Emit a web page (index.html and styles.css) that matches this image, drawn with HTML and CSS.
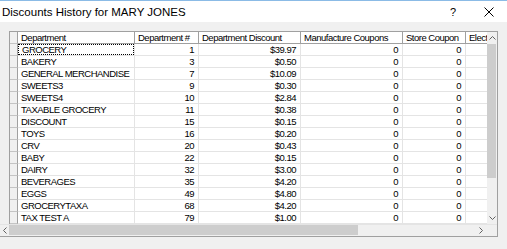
FILE: index.html
```html
<!DOCTYPE html>
<html>
<head>
<meta charset="utf-8">
<link rel="stylesheet" href="styles.css">
</head>
<body>
<div class="window">
  <div class="titlebar">
    <span class="title">Discounts History for MARY JONES</span>
    <span class="help">?</span>
    <svg class="close" width="10" height="10" viewBox="0 0 10 10"><path d="M0.5 0.5 L9.5 9.5 M9.5 0.5 L0.5 9.5" stroke="#000" stroke-width="1" fill="none"/></svg>
  </div>
  <div class="content">
    <div class="panel">
      <div class="main">
        <div class="gutter"></div>
        <div class="table">
          <div class="row head">
            <div class="c rh"></div>
            <div class="c">Department</div>
            <div class="c">Department #</div>
            <div class="c">Department Discount</div>
            <div class="c">Manufacture Coupons</div>
            <div class="c">Store Coupon</div>
            <div class="c last">Electronic Coupons</div>
          </div>
          <div class="row"><div class="c rh"></div><div class="c"><span class="focus">GROCERY</span></div><div class="c n">1</div><div class="c n">$39.97</div><div class="c n">0</div><div class="c n">0</div><div class="c last"></div></div>
          <div class="row"><div class="c rh"></div><div class="c">BAKERY</div><div class="c n">3</div><div class="c n">$0.50</div><div class="c n">0</div><div class="c n">0</div><div class="c last"></div></div>
          <div class="row"><div class="c rh"></div><div class="c">GENERAL MERCHANDISE</div><div class="c n">7</div><div class="c n">$10.09</div><div class="c n">0</div><div class="c n">0</div><div class="c last"></div></div>
          <div class="row"><div class="c rh"></div><div class="c">SWEETS3</div><div class="c n">9</div><div class="c n">$0.30</div><div class="c n">0</div><div class="c n">0</div><div class="c last"></div></div>
          <div class="row"><div class="c rh"></div><div class="c">SWEETS4</div><div class="c n">10</div><div class="c n">$2.84</div><div class="c n">0</div><div class="c n">0</div><div class="c last"></div></div>
          <div class="row"><div class="c rh"></div><div class="c">TAXABLE GROCERY</div><div class="c n">11</div><div class="c n">$0.38</div><div class="c n">0</div><div class="c n">0</div><div class="c last"></div></div>
          <div class="row"><div class="c rh"></div><div class="c">DISCOUNT</div><div class="c n">15</div><div class="c n">$0.15</div><div class="c n">0</div><div class="c n">0</div><div class="c last"></div></div>
          <div class="row"><div class="c rh"></div><div class="c">TOYS</div><div class="c n">16</div><div class="c n">$0.20</div><div class="c n">0</div><div class="c n">0</div><div class="c last"></div></div>
          <div class="row"><div class="c rh"></div><div class="c">CRV</div><div class="c n">20</div><div class="c n">$0.43</div><div class="c n">0</div><div class="c n">0</div><div class="c last"></div></div>
          <div class="row"><div class="c rh"></div><div class="c">BABY</div><div class="c n">22</div><div class="c n">$0.15</div><div class="c n">0</div><div class="c n">0</div><div class="c last"></div></div>
          <div class="row"><div class="c rh"></div><div class="c">DAIRY</div><div class="c n">32</div><div class="c n">$3.00</div><div class="c n">0</div><div class="c n">0</div><div class="c last"></div></div>
          <div class="row"><div class="c rh"></div><div class="c">BEVERAGES</div><div class="c n">35</div><div class="c n">$4.20</div><div class="c n">0</div><div class="c n">0</div><div class="c last"></div></div>
          <div class="row"><div class="c rh"></div><div class="c">EGGS</div><div class="c n">49</div><div class="c n">$4.80</div><div class="c n">0</div><div class="c n">0</div><div class="c last"></div></div>
          <div class="row"><div class="c rh"></div><div class="c">GROCERYTAXA</div><div class="c n">68</div><div class="c n">$4.20</div><div class="c n">0</div><div class="c n">0</div><div class="c last"></div></div>
          <div class="row"><div class="c rh"></div><div class="c">TAX TEST A</div><div class="c n">79</div><div class="c n">$1.00</div><div class="c n">0</div><div class="c n">0</div><div class="c last"></div></div>
        </div>
        <div class="vscroll">
          <div class="arrow up"><svg width="7" height="4" viewBox="0 0 7 4"><path d="M0.5 3.5 L3.5 0.5 L6.5 3.5" stroke="#606060" fill="none"/></svg></div>
          <div class="vthumb"></div>
          <div class="vtrack"></div>
          <div class="arrow down"><svg width="7" height="4" viewBox="0 0 7 4"><path d="M0.5 0.5 L3.5 3.5 L6.5 0.5" stroke="#606060" fill="none"/></svg></div>
        </div>
      </div>
      <div class="hscroll">
        <div class="harrow"><svg width="4" height="7" viewBox="0 0 4 7"><path d="M3.5 0.5 L0.5 3.5 L3.5 6.5" stroke="#606060" fill="none"/></svg></div>
        <div class="hthumb"></div>
        <div class="htrack"></div>
        <div class="harrow right"><svg width="4" height="7" viewBox="0 0 4 7"><path d="M0.5 0.5 L3.5 3.5 L0.5 6.5" stroke="#606060" fill="none"/></svg></div>
        <div class="corner"></div>
      </div>
    </div>
  </div>
</div>
</body>
</html>
```
FILE: styles.css
```css
html, body {
  margin: 0;
  padding: 0;
  background: #f0f0f0;
  overflow: hidden;
}
.window {
  width: 507px;
  height: 249px;
  display: flex;
  flex-direction: column;
}
.titlebar {
  height: 22px;
  box-sizing: border-box;
  border-top: 1px solid #8bbbe6;
  background: #ffffff;
  display: flex;
  align-items: center;
  padding-left: 2px;
  font-family: "Liberation Sans", Arial, sans-serif;
  font-size: 11.5px;
  color: #000;
}
.title {
  flex: 1;
}
.help {
  width: 34px;
  font-size: 11px;
  color: #000;
}
.close {
  margin-right: 13px;
}
.content {
  padding-top: 9px;
  flex: 1;
}
.panel {
  width: 498px;
  box-sizing: border-box;
  border-right: 1px solid #a0a0a0;
  border-bottom: 1px solid #a0a0a0;
  display: flex;
  flex-direction: column;
}
.main {
  display: flex;
}
.gutter {
  width: 9px;
}
.table {
  width: 478px;
  box-sizing: border-box;
  border-left: 1px solid #a0a0a0;
  border-top: 1px solid #a0a0a0;
  font-family: "Liberation Sans", Arial, sans-serif;
  font-size: 9.5px;
  letter-spacing: -0.5px;
  color: #000;
}
.row {
  display: grid;
  grid-template-columns: 8px 117px 64px 102px 102px 63px 21px;
  height: 12px;
  background: #fff;
}
.c {
  box-sizing: border-box;
  border-right: 1px solid #e4e4e4;
  border-bottom: 1px solid #e4e4e4;
  height: 12px;
  line-height: 11px;
  padding: 0 3px;
  white-space: nowrap;
  overflow: hidden;
}
.c.n {
  text-align: right;
  padding-right: 4px;
}
.c.last {
  border-right: none;
}
.head .c {
  border-right-color: #a0a0a0;
  border-bottom-color: #a0a0a0;
  padding-left: 3px;
}
.head .c.last {
  padding-right: 0;
  text-overflow: clip;
}
.c.rh {
  background: #f0f0f0;
  border-right-color: #a0a0a0;
  border-bottom-color: #c4c4c4;
  padding: 0;
}
.focus {
  display: inline-block;
  box-sizing: border-box;
  margin-left: -3px;
  padding-left: 3px;
  width: 116px;
  height: 11px;
  border: 1px dotted #000;
  line-height: 9px;
}
.vscroll {
  width: 10px;
  box-sizing: border-box;
  border-top: 1px solid #a0a0a0;
  background: #f0f0f0;
  display: flex;
  flex-direction: column;
}
.arrow {
  height: 12px;
  display: flex;
  align-items: center;
  justify-content: center;
}
.vthumb {
  height: 134px;
  margin-right: 1px;
  background: #cdcdcd;
}
.vtrack {
  flex: 1;
}
.hscroll {
  height: 11px;
  display: flex;
  background: #f0f0f0;
  border-top: 1px solid #e4e4e4;
}
.harrow {
  width: 9px;
  display: flex;
  align-items: center;
  justify-content: center;
}
.harrow.right {
  width: 12px;
}
.hthumb {
  width: 349px;
  background: #cdcdcd;
  margin-bottom: 1px;
}
.htrack {
  flex: 1;
}
.corner {
  width: 10px;
}
```
